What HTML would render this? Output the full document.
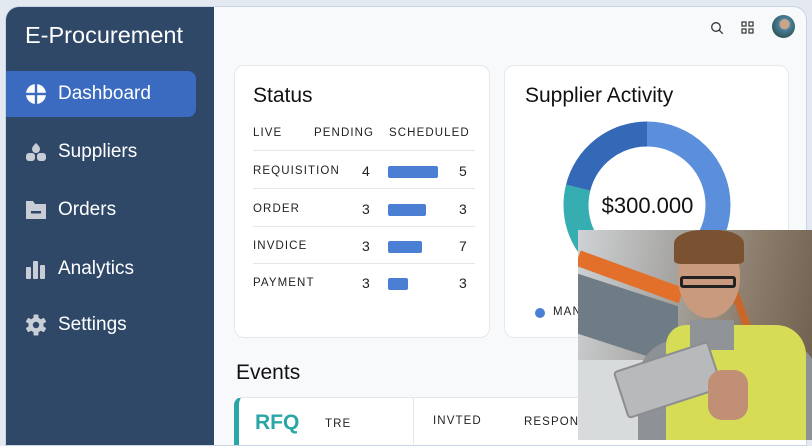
<!DOCTYPE html>
<html><head><meta charset="utf-8"><style>
*{margin:0;padding:0;box-sizing:border-box}
body{width:812px;height:440px;overflow:hidden;background:#e4e9f1;font-family:"Liberation Sans",sans-serif;position:relative}
.app{position:absolute;left:5px;top:6px;width:802px;height:440px;background:#f8f9fb;border:1px solid #c9d4e4;border-radius:14px 14px 0 0;overflow:hidden}
.side{position:absolute;left:0;top:0;width:208px;height:440px;background:#2f4868}
.logo{position:absolute;left:19px;top:15px;color:#fff;font-size:23.5px}
.nav{position:absolute;left:0;width:190px;height:46px;color:#fff;font-size:19px;display:flex;align-items:center;padding-left:52px}
.nav.act{background:#3a6bc0;border-radius:0 8px 8px 0}
.ico{position:absolute;left:19px;top:50%;transform:translateY(-50%)}
.card{position:absolute;background:#fff;border:1px solid #e6e8ec;border-radius:10px}
.h{font-size:21px;color:#111}
.t{position:absolute;font-size:11.5px;letter-spacing:1.1px;color:#222}
.n{position:absolute;font-size:14px;color:#222}
.bar{position:absolute;height:12px;background:#4a7fd4;border-radius:2px}
.line{position:absolute;left:18px;width:222px;height:1px;background:#e4e6ea}
</style></head><body>
<div class="app">
 <div class="side">
  <div class="logo">E-Procurement</div>
  <div class="nav act" style="top:64px">
   <svg class="ico" width="22" height="22" viewBox="0 0 22 22"><circle cx="11" cy="11" r="10" fill="#fff"/><rect x="9.8" y="0" width="2.4" height="22" fill="#3a6bc0"/><rect x="0" y="9.8" width="22" height="2.4" fill="#3a6bc0"/></svg>Dashboard</div>
  <div class="nav" style="top:122px">
   <svg class="ico" width="22" height="22" viewBox="0 0 22 22" fill="#c9ced6"><path d="M11 2c2 2 4 4 4 6a4 4 0 0 1-8 0c0-2 2-4 4-6z"/><rect x="1" y="12" width="9" height="8" rx="3"/><rect x="12" y="12" width="9" height="8" rx="3"/></svg>Suppliers</div>
  <div class="nav" style="top:180px">
   <svg class="ico" width="22" height="22" viewBox="0 0 22 22" fill="#c9ced6"><path d="M1 2h7l2 3h11v15H1z"/><rect x="6" y="12" width="10" height="2.5" fill="#2f4868"/></svg>Orders</div>
  <div class="nav" style="top:239px">
   <svg class="ico" width="22" height="22" viewBox="0 0 22 22" fill="#c9ced6"><rect x="1" y="9" width="5" height="12" rx="1"/><rect x="8" y="3" width="5" height="18" rx="1"/><rect x="15" y="7" width="5" height="14" rx="1"/></svg>Analytics</div>
  <div class="nav" style="top:295px">
   <svg class="ico" width="22" height="22" viewBox="0 0 22 22"><g fill="#c9ced6"><circle cx="11" cy="11" r="7.5"/><g id="g"><rect x="8.5" y="0.5" width="5" height="21" rx="1"/></g><use href="#g" transform="rotate(60 11 11)"/><use href="#g" transform="rotate(120 11 11)"/></g><circle cx="11" cy="11" r="3.2" fill="#2f4868"/></svg>Settings</div>
 </div>
 <svg style="position:absolute;left:704px;top:14px" width="14" height="14" viewBox="0 0 14 14" fill="none" stroke="#333" stroke-width="1.3"><circle cx="6" cy="6" r="4.3"/><path d="M9.2 9.2l3.5 3.5"/></svg>
 <svg style="position:absolute;left:735px;top:14px" width="13" height="13" viewBox="0 0 13 13" fill="none" stroke="#333" stroke-width="1.2"><rect x="1" y="1" width="4" height="4"/><rect x="8" y="1" width="4" height="4"/><rect x="1" y="8" width="4" height="4"/><rect x="8" y="8" width="4" height="4"/></svg>
 <div style="position:absolute;left:766px;top:8px;width:23px;height:23px;border-radius:50%;background:radial-gradient(circle at 55% 40%,#c9a68a 0 25%,#4d7fa0 30%,#2f5a5a 70%)"></div>
 <div class="card" style="left:228px;top:58px;width:256px;height:273px">
  <div class="h" style="position:absolute;left:18px;top:18px">Status</div>
  <div class="t" style="left:18px;top:61px">LIVE</div>
  <div class="t" style="left:79px;top:61px">PENDING</div>
  <div class="t" style="left:154px;top:61px">SCHEDULED</div>
  <div class="line" style="top:84px"></div>
  <div class="t" style="left:18px;top:99px">REQUISITION</div><div class="n" style="left:127px;top:97px">4</div><div class="bar" style="left:153px;top:100px;width:50px"></div><div class="n" style="left:224px;top:97px">5</div>
  <div class="line" style="top:122px"></div>
  <div class="t" style="left:18px;top:137px">ORDER</div><div class="n" style="left:127px;top:135px">3</div><div class="bar" style="left:153px;top:138px;width:38px"></div><div class="n" style="left:224px;top:135px">3</div>
  <div class="line" style="top:160px"></div>
  <div class="t" style="left:18px;top:174px">INVDICE</div><div class="n" style="left:127px;top:172px">3</div><div class="bar" style="left:153px;top:175px;width:34px"></div><div class="n" style="left:224px;top:172px">7</div>
  <div class="line" style="top:197px"></div>
  <div class="t" style="left:18px;top:211px">PAYMENT</div><div class="n" style="left:127px;top:209px">3</div><div class="bar" style="left:153px;top:212px;width:20px"></div><div class="n" style="left:224px;top:209px">3</div>
 </div>
 <div class="card" style="left:498px;top:58px;width:285px;height:273px">
  <div class="h" style="position:absolute;left:20px;top:18px">Supplier Activity</div>
  <svg style="position:absolute;left:57px;top:54px" width="170" height="170" viewBox="0 0 170 170">
   <g transform="rotate(-90 85 85)" fill="none" stroke-width="25">
    <circle cx="85" cy="85" r="71" stroke="#5b8edb" stroke-dasharray="248 500"/>
    <circle cx="85" cy="85" r="71" stroke="#36adb0" stroke-dasharray="0 248 104 500"/>
    <circle cx="85" cy="85" r="71" stroke="#3469b8" stroke-dasharray="0 352 95 500"/>
   </g>
  </svg>
  <div style="position:absolute;left:0;width:285px;text-align:center;top:127px;font-size:22px;color:#111">$300.000</div>
  <div style="position:absolute;left:30px;top:242px;width:10px;height:10px;border-radius:50%;background:#4a7fd4"></div>
  <div class="t" style="left:48px;top:240px">MANAGED</div>
 </div>
 <div class="h" style="position:absolute;left:230px;top:354px">Events</div>
 <div style="position:absolute;left:228px;top:390px;width:600px;height:60px;background:#fff;border-top:1px solid #e6e8ec;border-left:5px solid #2aa6a6;border-radius:8px 0 0 0"></div>
 <div style="position:absolute;left:249px;top:404px;font-size:21px;color:#2aa6a6;font-weight:bold">RFQ</div>
 <div class="t" style="left:319px;top:411px">TRE</div>
 <div style="position:absolute;left:407px;top:391px;width:1px;height:50px;background:#e8e8ea"></div>
 <div class="t" style="left:427px;top:408px">INVTED</div>
 <div class="t" style="left:518px;top:409px">RESPONSE</div>
</div>
<div style="position:absolute;left:578px;top:230px;width:234px;height:210px;overflow:hidden;background:linear-gradient(100deg,#cfd3d6 0%,#a9a8a5 35%,#8a7a68 70%,#6b5c4c 100%)">
 <div style="position:absolute;left:0;top:20px;width:110px;height:16px;background:#e2702a;transform:rotate(20deg);transform-origin:left"></div>
 <div style="position:absolute;left:0;top:60px;width:100px;height:60px;background:#6f7c86;transform:skewY(18deg)"></div>
 <div style="position:absolute;left:0;top:130px;width:90px;height:80px;background:#d8dbdc"></div>
 <div style="position:absolute;left:170px;top:10px;width:8px;height:200px;background:#c8662c;transform:rotate(-20deg)"></div>
 <div style="position:absolute;left:60px;top:110px;width:180px;height:110px;background:#8e9195;border-radius:40px 40px 0 0"></div>
 <div style="position:absolute;left:88px;top:95px;width:140px;height:120px;background:#d6dc55;border-radius:20px 30px 0 0"></div>
 <div style="position:absolute;left:112px;top:90px;width:44px;height:30px;background:#909397"></div>
 <div style="position:absolute;left:100px;top:8px;width:62px;height:80px;background:#c99a7e;border-radius:45% 45% 50% 50%"></div>
 <div style="position:absolute;left:96px;top:0;width:70px;height:34px;background:#7a5232;border-radius:40% 40% 10% 10%"></div>
 <div style="position:absolute;left:102px;top:46px;width:56px;height:12px;border:3px solid #222;border-radius:3px"></div>
 <div style="position:absolute;left:40px;top:125px;width:100px;height:50px;background:#b8b9bb;border:2px solid #8c8d90;transform:rotate(-18deg);border-radius:4px"></div>
 <div style="position:absolute;left:130px;top:140px;width:40px;height:50px;background:#c08f75;border-radius:14px"></div>
</div>
</body></html>
